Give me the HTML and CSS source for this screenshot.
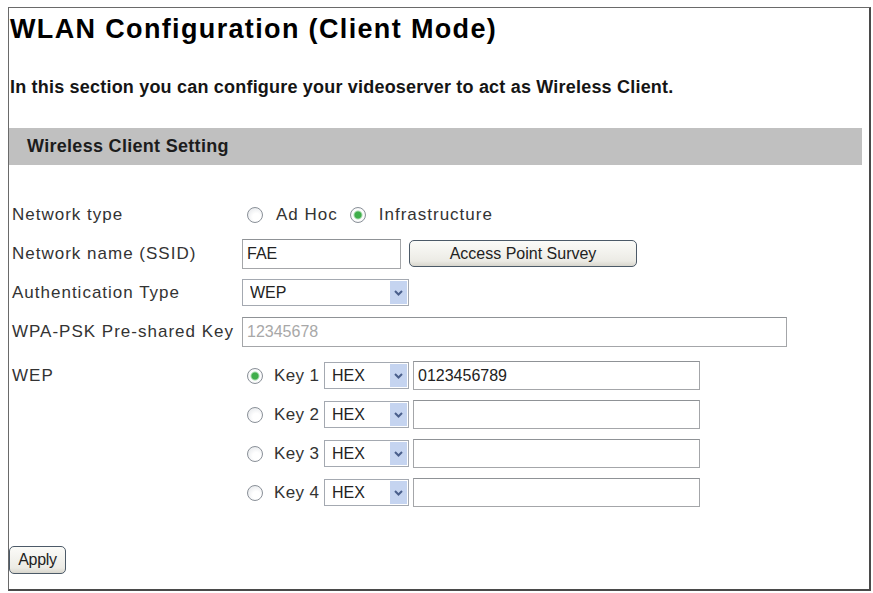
FILE: index.html
```html
<!DOCTYPE html>
<html lang="en">

<head>
    <meta charset="UTF-8">
    <meta name="viewport" content="width=device-width, initial-scale=1.0">
    <title>WLAN Configuration</title>
    <link rel="stylesheet" href="styles.css">
</head>

<body>
    <div class="page">
        <h1>WLAN Configuration (Client Mode)</h1>
        <p class="intro">In this section you can configure your videoserver to act as Wireless Client.</p>

        <div class="section-bar">Wireless Client Setting</div>

        <form class="settings" onsubmit="return false">
            <div class="row">
                <label class="label">Network type</label>
                <div class="field">
                    <input type="radio" name="nettype" class="radio" id="adhoc">
                    <label for="adhoc" class="opt">Ad Hoc</label>
                    <input type="radio" name="nettype" class="radio" id="infra" checked>
                    <label for="infra" class="opt">Infrastructure</label>
                </div>
            </div>

            <div class="row">
                <label class="label" for="ssid">Network name (SSID)</label>
                <div class="field">
                    <input type="text" id="ssid" class="text ssid" value="FAE">
                    <button type="button" class="btn survey">Access Point Survey</button>
                </div>
            </div>

            <div class="row">
                <label class="label" for="auth">Authentication Type</label>
                <div class="field">
                    <span class="select auth">
                        <select id="auth">
                            <option>WEP</option>
                            <option>WPA-PSK</option>
                            <option>None</option>
                        </select>
                        <span class="drop"><svg width="9" height="6" viewBox="0 0 9 6"><path d="M1 1l3.5 3.5L8 1" fill="none" stroke="#4a5f8c" stroke-width="2"/></svg></span>
                    </span>
                </div>
            </div>

            <div class="row">
                <label class="label" for="psk">WPA-PSK Pre-shared Key</label>
                <div class="field">
                    <input type="text" id="psk" class="text psk" value="12345678" disabled>
                </div>
            </div>

            <div class="wep">
                <div class="label">WEP</div>
                <div class="keys">
                    <div class="key-row">
                        <input type="radio" name="wepkey" class="radio" id="key1" checked>
                        <label for="key1" class="key-label">Key 1</label>
                        <span class="select hex">
                            <select><option>HEX</option><option>ASCII</option></select>
                            <span class="drop"><svg width="9" height="6" viewBox="0 0 9 6"><path d="M1 1l3.5 3.5L8 1" fill="none" stroke="#4a5f8c" stroke-width="2"/></svg></span>
                        </span>
                        <input type="text" class="text key" value="0123456789">
                    </div>
                    <div class="key-row">
                        <input type="radio" name="wepkey" class="radio" id="key2">
                        <label for="key2" class="key-label">Key 2</label>
                        <span class="select hex">
                            <select><option>HEX</option><option>ASCII</option></select>
                            <span class="drop"><svg width="9" height="6" viewBox="0 0 9 6"><path d="M1 1l3.5 3.5L8 1" fill="none" stroke="#4a5f8c" stroke-width="2"/></svg></span>
                        </span>
                        <input type="text" class="text key" value="">
                    </div>
                    <div class="key-row">
                        <input type="radio" name="wepkey" class="radio" id="key3">
                        <label for="key3" class="key-label">Key 3</label>
                        <span class="select hex">
                            <select><option>HEX</option><option>ASCII</option></select>
                            <span class="drop"><svg width="9" height="6" viewBox="0 0 9 6"><path d="M1 1l3.5 3.5L8 1" fill="none" stroke="#4a5f8c" stroke-width="2"/></svg></span>
                        </span>
                        <input type="text" class="text key" value="">
                    </div>
                    <div class="key-row">
                        <input type="radio" name="wepkey" class="radio" id="key4">
                        <label for="key4" class="key-label">Key 4</label>
                        <span class="select hex">
                            <select><option>HEX</option><option>ASCII</option></select>
                            <span class="drop"><svg width="9" height="6" viewBox="0 0 9 6"><path d="M1 1l3.5 3.5L8 1" fill="none" stroke="#4a5f8c" stroke-width="2"/></svg></span>
                        </span>
                        <input type="text" class="text key" value="">
                    </div>
                </div>
            </div>

            <button type="submit" class="btn apply">Apply</button>
        </form>
    </div>
</body>

</html>
```

FILE: styles.css
```css
* {
    box-sizing: border-box;
    margin: 0;
    padding: 0;
}

body {
    background: #fff;
    color: #2b2b2b;
    font-family: "Liberation Sans", Arial, sans-serif;
}

.page {
    margin: 7px 2px 0 8px;
    height: 584px;
    border: 1px solid #6a6a6a;
    border-right: 2px solid #4a4a4a;
    border-bottom: 2px solid #4a4a4a;
}

h1 {
    margin: 5px 0 0 1px;
    font-size: 27px;
    line-height: 32px;
    letter-spacing: 1.35px;
    color: #000;
}

.intro {
    margin: 31px 0 0 1px;
    font-size: 18px;
    font-weight: bold;
    line-height: 22px;
    letter-spacing: 0.2px;
    color: #151515;
}

.section-bar {
    margin: 30px 7px 0 0;
    height: 37px;
    line-height: 37px;
    padding-left: 18px;
    background: #c0c0c0;
    font-size: 18px;
    font-weight: bold;
    letter-spacing: 0.3px;
    color: #1c1c1c;
}

.settings {
    margin-top: 30px;
}

.row,
.wep {
    display: grid;
    grid-template-columns: 233px 1fr;
}

.row {
    height: 39px;
    align-items: center;
}

.label {
    padding-left: 3px;
    font-size: 17px;
    letter-spacing: 1px;
    color: #333;
}

.field {
    display: flex;
    align-items: center;
}

.opt,
.key-label {
    font-size: 17px;
    letter-spacing: 1px;
    color: #333;
}

.opt {
    margin-right: 7px;
}

/* radio buttons, XP look */
.radio {
    appearance: none;
    width: 16px;
    height: 16px;
    border: 1px solid #8a9098;
    border-radius: 50%;
    background: radial-gradient(circle at 60% 65%, #fff 30%, #dfe2e6 100%);
    margin: 0 13px 0 5px;
    flex: none;
}

.radio:checked {
    background: radial-gradient(circle, #3fae4a 0 3px, #a8dcae 4px, #fff 5px, #e6e8eb 100%);
}

.text {
    height: 30px;
    border: 1px solid #a4a6a9;
    border-top-color: #8f9296;
    padding: 0 4px;
    font-family: inherit;
    font-size: 16px;
    color: #222;
    background: #fff;
}

.text:disabled {
    color: #a8a8a8;
    background: #fff;
}

.ssid {
    width: 159px;
}

.psk {
    width: 545px;
}

/* select box with its own drop button drawn on top */
.select {
    position: relative;
    display: inline-block;
    height: 27px;
}

.select select {
    appearance: none;
    width: 100%;
    height: 100%;
    border: 1px solid #a4a9b1;
    background: #fff;
    padding-left: 7px;
    font-family: inherit;
    font-size: 16px;
    color: #222;
}

.select .drop {
    position: absolute;
    top: 2px;
    right: 2px;
    bottom: 2px;
    width: 17px;
    background: #c5d4f0;
    display: flex;
    align-items: center;
    justify-content: center;
    pointer-events: none;
}

.auth {
    width: 167px;
}

.hex {
    width: 85px;
    margin-right: 4px;
}

.btn {
    font-family: inherit;
    font-size: 16px;
    color: #222;
    border: 1px solid #4c5a68;
    border-radius: 5px;
    background: linear-gradient(#fbfbf8, #ecebe5 80%, #d8d6cd);
    cursor: pointer;
}

.survey {
    margin-left: 8px;
    width: 228px;
    height: 27px;
}

.wep {
    margin-top: 5px;
}

.wep .label {
    line-height: 39px;
}

.key-row {
    height: 39px;
    display: flex;
    align-items: center;
}

.key-row .radio {
    margin-right: 11px;
}

.key-label {
    width: 50px;
    letter-spacing: 0.4px;
}

.key {
    width: 287px;
    height: 29px;
}

.apply {
    margin-top: 34px;
    width: 57px;
    height: 28px;
    letter-spacing: -0.3px;
}
```
